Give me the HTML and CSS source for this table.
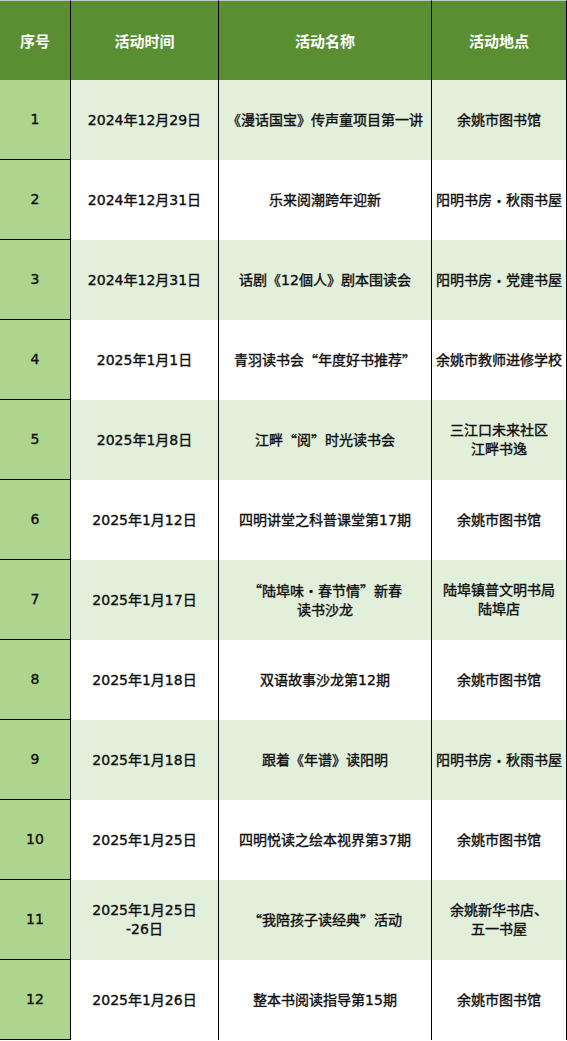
FILE: index.html
```html
<!DOCTYPE html>
<html lang="zh-CN">
<head>
<meta charset="utf-8">
<title>活动安排</title>
<link rel="stylesheet" href="styles.css">
</head>
<body>
<div class="table">
  <div class="cell head">序号</div>
  <div class="cell head">活动时间</div>
  <div class="cell head">活动名称</div>
  <div class="cell head">活动地点</div>

  <div class="cell num">1</div>
  <div class="cell odd">2024年12月29日</div>
  <div class="cell odd">《漫话国宝》传声童项目第一讲</div>
  <div class="cell odd">余姚市图书馆</div>

  <div class="cell num">2</div>
  <div class="cell">2024年12月31日</div>
  <div class="cell">乐来阅潮跨年迎新</div>
  <div class="cell">阳明书房<span class="q">·</span>秋雨书屋</div>

  <div class="cell num">3</div>
  <div class="cell odd">2024年12月31日</div>
  <div class="cell odd">话剧《12個人》剧本围读会</div>
  <div class="cell odd">阳明书房<span class="q">·</span>党建书屋</div>

  <div class="cell num">4</div>
  <div class="cell">2025年1月1日</div>
  <div class="cell">青羽读书会<span class="q">“</span>年度好书推荐<span class="q">”</span></div>
  <div class="cell">余姚市教师进修学校</div>

  <div class="cell num">5</div>
  <div class="cell odd">2025年1月8日</div>
  <div class="cell odd">江畔<span class="q">“</span>阅<span class="q">”</span>时光读书会</div>
  <div class="cell odd">三江口未来社区<br>江畔书逸</div>

  <div class="cell num">6</div>
  <div class="cell">2025年1月12日</div>
  <div class="cell">四明讲堂之科普课堂第17期</div>
  <div class="cell">余姚市图书馆</div>

  <div class="cell num">7</div>
  <div class="cell odd">2025年1月17日</div>
  <div class="cell odd"><span><span class="q">“</span>陆埠味<span class="q">·</span>春节情<span class="q">”</span>新春<br>读书沙龙</span></div>
  <div class="cell odd">陆埠镇普文明书局<br>陆埠店</div>

  <div class="cell num">8</div>
  <div class="cell">2025年1月18日</div>
  <div class="cell">双语故事沙龙第12期</div>
  <div class="cell">余姚市图书馆</div>

  <div class="cell num">9</div>
  <div class="cell odd">2025年1月18日</div>
  <div class="cell odd">跟着《年谱》读阳明</div>
  <div class="cell odd">阳明书房<span class="q">·</span>秋雨书屋</div>

  <div class="cell num">10</div>
  <div class="cell">2025年1月25日</div>
  <div class="cell">四明悦读之绘本视界第37期</div>
  <div class="cell">余姚市图书馆</div>

  <div class="cell num">11</div>
  <div class="cell odd">2025年1月25日<br>-26日</div>
  <div class="cell odd"><span class="q">“</span>我陪孩子读经典<span class="q">”</span>活动</div>
  <div class="cell odd">余姚新华书店、<br>五一书屋</div>

  <div class="cell num">12</div>
  <div class="cell">2025年1月26日</div>
  <div class="cell">整本书阅读指导第15期</div>
  <div class="cell">余姚市图书馆</div>
</div>
</body>
</html>
```

FILE: styles.css
```css
html, body {
  margin: 0;
  padding: 0;
  background: #ffffff;
}

.table {
  display: grid;
  grid-template-columns: 71px 148px 213px 135px;
  grid-auto-rows: 80px;
  width: 567px;
  font-family: "DejaVu Sans", "Noto Sans CJK SC", sans-serif;
  font-size: 14px;
  line-height: 19px;
  color: #0d0d0d;
  -webkit-text-stroke: 0.35px #0d0d0d;
}

.cell {
  box-sizing: border-box;
  border-right: 1px solid #000000;
  display: flex;
  align-items: center;
  justify-content: center;
  text-align: center;
  white-space: nowrap;
}

.head {
  background: #598e32;
  color: #ffffff;
  -webkit-text-stroke: 0;
  font-family: "Noto Sans CJK SC", sans-serif;
  font-weight: 700;
  font-size: 15px;
  border-top: 1px solid #c4c4c4;
}

.num {
  background: #add58d;
  border-bottom: 1px solid #000000;
}

.odd {
  background: #e2efda;
}

.q {
  font-family: "Noto Sans CJK SC", sans-serif;
  font-feature-settings: "fwid" 1;
}
```
